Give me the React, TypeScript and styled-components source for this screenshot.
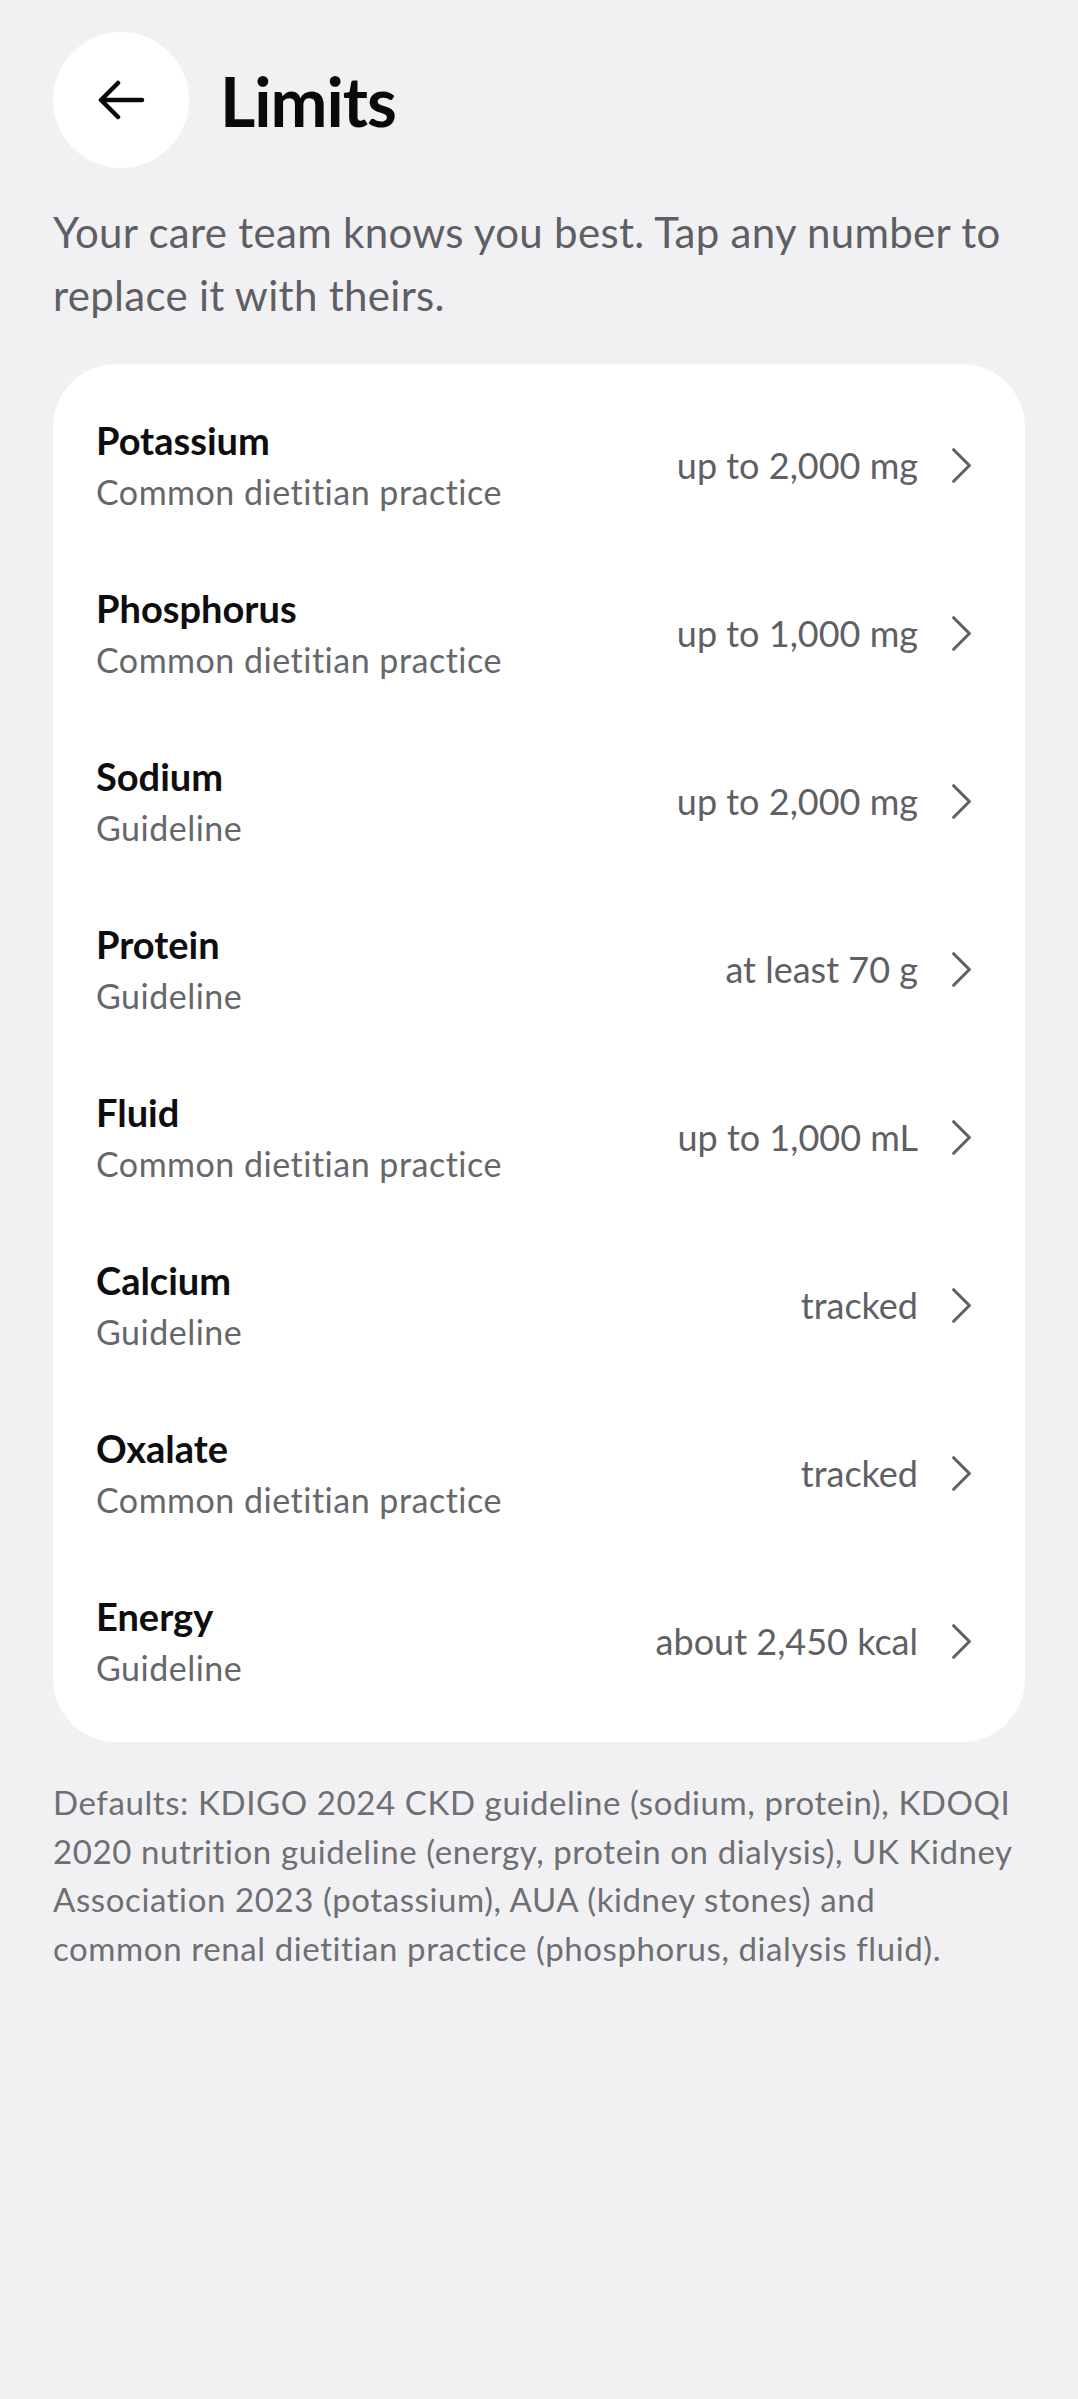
import React from 'react';
import styled, { createGlobalStyle } from 'styled-components';

interface LimitItem {
  id: string;
  name: string;
  source: string;
  value: string;
}

const limits: LimitItem[] = [
  { id: 'potassium', name: 'Potassium', source: 'Common dietitian practice', value: 'up to 2,000 mg' },
  { id: 'phosphorus', name: 'Phosphorus', source: 'Common dietitian practice', value: 'up to 1,000 mg' },
  { id: 'sodium', name: 'Sodium', source: 'Guideline', value: 'up to 2,000 mg' },
  { id: 'protein', name: 'Protein', source: 'Guideline', value: 'at least 70 g' },
  { id: 'fluid', name: 'Fluid', source: 'Common dietitian practice', value: 'up to 1,000 mL' },
  { id: 'calcium', name: 'Calcium', source: 'Guideline', value: 'tracked' },
  { id: 'oxalate', name: 'Oxalate', source: 'Common dietitian practice', value: 'tracked' },
  { id: 'energy', name: 'Energy', source: 'Guideline', value: 'about 2,450 kcal' },
];

const GlobalStyle = createGlobalStyle`
  html, body {
    margin: 0;
    padding: 0;
    min-height: 100%;
    background: #F1F1F3;
  }

  body {
    font-family: Lato, "Noto Sans", "Liberation Sans", sans-serif;
    color: #0E0E10;
    -webkit-font-smoothing: antialiased;
  }
`;

const Screen = styled.main`
  min-height: 2399px;
  box-sizing: border-box;
  padding: 32px 53px 60px;
  background: #F1F1F3;
  display: flex;
  flex-direction: column;
`;

const Header = styled.header`
  display: flex;
  align-items: center;
  gap: 31px;
`;

const BackButton = styled.button`
  width: 136px;
  height: 136px;
  border-radius: 50%;
  border: none;
  background: #FFFFFF;
  display: flex;
  align-items: center;
  justify-content: center;
  padding: 0;
  cursor: pointer;
`;

const Title = styled.h1`
  margin: 0;
  font-size: 68px;
  font-weight: 700;
  letter-spacing: -1px;
  color: #0A0A0B;
`;

const Intro = styled.p`
  margin: 33px 0 0;
  font-size: 42px;
  line-height: 63px;
  letter-spacing: 0.3px;
  color: #5E5F65;
`;

const Card = styled.section`
  margin-top: 37px;
  background: #FFFFFF;
  border-radius: 63px;
  padding: 17px 0;
  display: flex;
  flex-direction: column;
`;

const Row = styled.button`
  height: 168px;
  border: none;
  background: transparent;
  display: flex;
  align-items: center;
  padding: 0 32px 0 43px;
  font-family: inherit;
  text-align: left;
  cursor: pointer;
`;

const RowText = styled.div`
  flex: 1;
  display: flex;
  flex-direction: column;
  gap: 10px;
`;

const RowName = styled.span`
  font-size: 38px;
  line-height: 44px;
  font-weight: 700;
  color: #0E0E10;
`;

const RowSource = styled.span`
  font-size: 34px;
  line-height: 40px;
  letter-spacing: 0.5px;
  color: #66676C;
`;

const RowValue = styled.span`
  font-size: 36px;
  color: #5F6065;
  margin: 0 12px 0 0;
`;

const Footnote = styled.p`
  margin: 36px 0 0;
  font-size: 33px;
  line-height: 48.5px;
  letter-spacing: 0.6px;
  color: #6E6F74;
`;

const BackArrow = () => (
  <svg width="48" height="40" viewBox="0 0 48 40" fill="none">
    <path d="M45 20H4M21 3L4 20l17 17" stroke="#0A0A0B" strokeWidth="4.5" strokeLinecap="round" strokeLinejoin="round" />
  </svg>
);

const Chevron = () => (
  <svg width="63" height="63" viewBox="0 0 24 24" fill="none">
    <path d="M9 6l6 6-6 6" stroke="#5F6065" strokeWidth="1.2" strokeLinecap="round" strokeLinejoin="round" />
  </svg>
);

export default function App() {
  return (
    <>
      <GlobalStyle />
      <Screen>
        <Header>
          <BackButton type="button" aria-label="Back">
            <BackArrow />
          </BackButton>
          <Title>Limits</Title>
        </Header>

        <Intro>Your care team knows you best. Tap any number to replace it with theirs.</Intro>

        <Card>
          {limits.map((item) => (
            <Row key={item.id} type="button">
              <RowText>
                <RowName>{item.name}</RowName>
                <RowSource>{item.source}</RowSource>
              </RowText>
              <RowValue>{item.value}</RowValue>
              <Chevron />
            </Row>
          ))}
        </Card>

        <Footnote>
          Defaults: KDIGO 2024 CKD guideline (sodium, protein), KDOQI 2020 nutrition guideline (energy,
          protein on dialysis), UK Kidney Association 2023 (potassium), AUA (kidney stones) and
          <br />
          common renal dietitian practice (phosphorus, dialysis fluid).
        </Footnote>
      </Screen>
    </>
  );
}
